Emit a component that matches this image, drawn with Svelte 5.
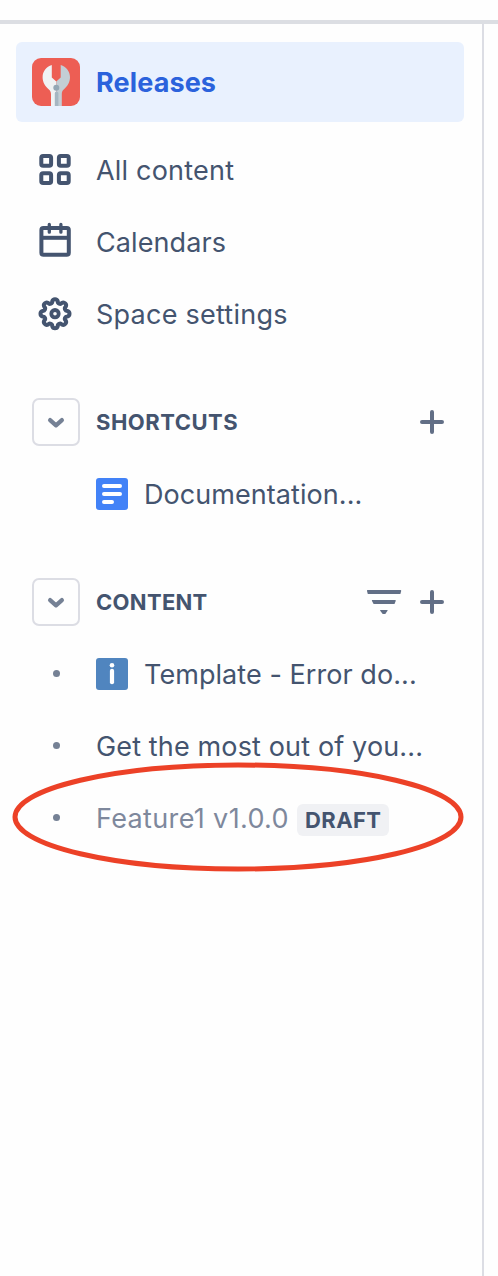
<script>
  // Outline of the settings gear: eight round lobes joined by shallow valleys.
  const at = (deg, r) => {
    const a = (deg * Math.PI) / 180;
    return `${(24 + r * Math.sin(a)).toFixed(2)} ${(24 - r * Math.cos(a)).toFixed(2)}`;
  };
  const gear =
    `M${at(-12.5, 12.7)}` +
    Array.from({ length: 8 }, (_, k) => `A2.85 2.85 0 0 1 ${at(k * 45 + 12.5, 12.7)}A2.3 2.3 0 0 0 ${at(k * 45 + 32.5, 12.7)}`).join('') +
    'Z';
  const nav = [
    { label: 'All content', icon: 'grid', spacing: 0.2 },
    { label: 'Calendars', icon: 'calendar', spacing: 0.1 },
    { label: 'Space settings', icon: 'gear', spacing: 0.24 }
  ];
</script>

{#snippet toggle()}
  <button class="toggle" aria-label="Toggle section">
    <svg width="48" height="48" viewBox="0 0 48 48"><path d="M18.1 22.1 24 27.4l5.9-5.3" fill="none" stroke="#758195" stroke-width="4.2" stroke-linecap="round" stroke-linejoin="round" /></svg>
  </button>
{/snippet}

{#snippet plus()}
  <svg width="48" height="48" viewBox="0 0 48 48"><path d="M24 14v20M14 24h20" stroke="#626f86" stroke-width="4" stroke-linecap="round" /></svg>
{/snippet}

<div class="page">
  <header></header>
  <aside>
    <a class="space" href="#releases">
      <svg width="48" height="48" viewBox="0 0 48 48">
        <rect width="48" height="48" rx="9" fill="#ed5e54" />
        <path d="M19.8 7.1C14.4 8.4 10.6 13.5 10.6 19.3c0 5 2.6 9 6 12 1.7 1.5 2.4 2.8 2.4 4.7v12h5.3V23.6l-4.5-4z" fill="#f0f2f4" />
        <path d="M28.7 7.1c5.4 1.3 9.3 6.4 9.3 12.2 0 5-2.6 9-6 12-1.7 1.5-2.2 2.8-2.2 4.7v12h-5.5V23.6l4.4-4z" fill="#c3ced5" />
        <path d="M22.8 35.2a1.8 1.8 0 0 1 3.6 0V48h-3.6z" fill="#a5b6c2" />
        <circle cx="24.3" cy="29.8" r="3" fill="#94a7b5" />
      </svg>
      <span>Releases</span>
    </a>
    <nav>
      {#each nav as item}
        <a class="row" href="#{item.icon}">
          <svg width="48" height="48" viewBox="0 0 48 48" fill="none" stroke="#44546f" stroke-width="4">
            {#if item.icon === 'grid'}
              <rect x="9.3" y="10" width="9.8" height="9.8" rx="1.8" />
              <rect x="26.9" y="10" width="9.8" height="9.8" rx="1.8" />
              <rect x="9.3" y="27.2" width="9.8" height="9.8" rx="1.8" />
              <rect x="26.9" y="27.2" width="9.8" height="9.8" rx="1.8" />
            {:else if item.icon === 'calendar'}
              <rect x="9.4" y="10.1" width="27.4" height="26.7" rx="2" />
              <path d="M9.4 19.8h27.4" />
              <path d="M17.3 6.4v7.8M28.9 6.4v7.8" stroke-width="3.3" stroke-linecap="round" />
            {:else}
              <g transform="translate(-1 -.3)">
                <path d={gear} stroke-linejoin="round" />
                <circle cx="24" cy="24" r="3.7" stroke-width="3.8" />
              </g>
            {/if}
          </svg>
          <span style:letter-spacing="{item.spacing}px">{item.label}</span>
        </a>
      {/each}
    </nav>
    <section>
      <div class="row">
        {@render toggle()}
        <h2 class="shortcuts">SHORTCUTS</h2>
        {@render plus()}
      </div>
      <a class="row shortcut" href="#documentation">
        <svg width="32" height="32" viewBox="0 0 32 32">
          <rect width="32" height="32" rx="3" fill="#4282f7" />
          <path d="M8 8h16M8 16h16M8 24h8" stroke="#fff" stroke-width="4" stroke-linecap="round" />
        </svg>
        <span class="doc">Documentation...</span>
      </a>
    </section>
    <section>
      <div class="row">
        {@render toggle()}
        <h2>CONTENT</h2>
        <svg width="48" height="48" viewBox="0 0 48 48" fill="#626f86"><path d="M7.6 12h32.8q1 0 .8 1l-.8 3H7.8L7 13q-.2-1 .6-1zM12.4 22h22.8q.8 0 .5 1l-1.2 3H13.6l-1.6-3q-.5-1 .4-1zM20.6 32h6.7q.7 0 .2.8L25.3 36h-2.6l-2.5-3.2q-.5-.8.4-.8z" /></svg>
        {@render plus()}
      </div>
      <a class="row" href="#template">
        <i></i>
        <svg width="32" height="32" viewBox="0 0 32 32">
          <rect width="32" height="32" rx="3" fill="#5085bf" />
          <circle cx="16" cy="7.2" r="2.3" fill="#fff" />
          <path d="M16 12.8v11.4" stroke="#fff" stroke-width="4.2" stroke-linecap="round" />
        </svg>
        <span class="template">Template - Error do...</span>
      </a>
      <a class="row" href="#get-started">
        <i></i>
        <span class="most">Get the most out of you...</span>
      </a>
      <a class="row draft" href="#feature">
        <i></i>
        <span class="feature">Feature1 v1.0.0</span>
        <b>DRAFT</b>
        <svg class="ring" width="452" height="110" viewBox="0 0 452 110"><ellipse cx="226" cy="55" rx="223" ry="52" fill="none" stroke="#ec4127" stroke-width="5" /></svg>
      </a>
    </section>
  </aside>
</div>

<style>
  :global(body) { margin: 0; background: #fefefe; }
  .page {
    box-sizing: border-box;
    height: 1276px;
    padding-top: 20px;
    display: flex;
    flex-direction: column;
    overflow: hidden;
    font-family: Inter, "Liberation Sans", sans-serif;
    font-size: 27px;
    line-height: 40px;
    color: #44546f;
  }
  header { height: 4px; flex: none; background: #dcdee3; }
  aside {
    box-sizing: border-box;
    width: 484px;
    flex: 1;
    padding: 18px 18px 0 16px;
    border-right: 2px solid #dcdde4;
  }
  a { color: inherit; text-decoration: none; }
  svg { display: block; flex: none; }
  span { white-space: nowrap; padding-top: 2px; }
  .space {
    display: flex;
    align-items: center;
    gap: 16px;
    height: 80px;
    padding-left: 16px;
    border-radius: 6px;
    background: #e9f1fe;
    color: #2b62dc;
    font-weight: 700;
    letter-spacing: 0.12px;
  }
  nav { margin-top: 12px; }
  .row {
    position: relative;
    display: flex;
    align-items: center;
    gap: 16px;
    height: 72px;
    padding-left: 16px;
  }
  section { margin-top: 36px; }
  .toggle {
    box-sizing: border-box;
    width: 48px;
    height: 48px;
    padding: 0;
    border: 2px solid #dcdde4;
    border-radius: 7px;
    background: none;
    display: grid;
    place-content: center;
  }
  h2 {
    flex: 1;
    margin: 0;
    font-size: 22px;
    font-weight: 700;
    letter-spacing: 0.3px;
  }
  .shortcuts { letter-spacing: 0.5px; }
  .row h2 ~ svg { margin-right: 8px; }
  .row h2 ~ svg + svg { margin-left: -24px; }
  .shortcut { padding-left: 80px; }
  .doc, .template { letter-spacing: 0.06px; }
  .most { letter-spacing: 0.14px; }
  i {
    width: 7px;
    height: 7px;
    margin: -1px 20px 0 21px;
    border-radius: 50%;
    background: #758195;
  }
  .draft { gap: 0; color: #7e889c; }
  .draft i { margin-right: 36px; }
  .feature { width: 192px; letter-spacing: 0.35px; }
  b {
    height: 32px;
    margin: 4px 0 0 9px;
    padding: 0 8px;
    border-radius: 6px;
    background: #f0f1f4;
    color: #44546f;
    font-size: 22px;
    font-weight: 700;
    line-height: 32px;
    letter-spacing: 0.4px;
  }
  .ring { position: absolute; left: -4px; top: -20px; }
</style>
